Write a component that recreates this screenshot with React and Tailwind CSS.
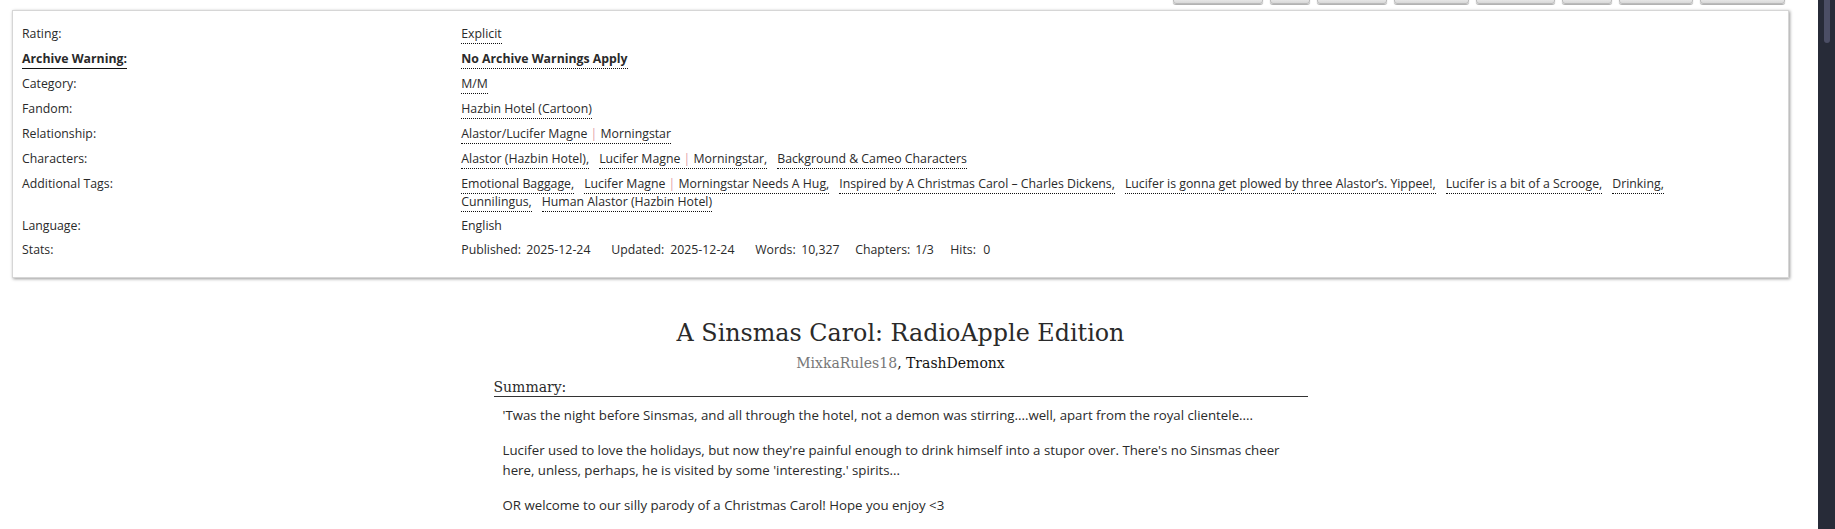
import React from 'react'

const sans = "font-['Open_Sans',sans-serif]"
const serif = "font-['DejaVu_Serif',serif]"

const navButtons = [90, 40, 70, 75, 79, 50, 74, 85]

const Tag = ({ children, last, bold }) => (
  <span className="inline-block mr-[10px]">
    <span className={`border-b border-dotted border-[#111] pb-[1px] ${bold ? 'font-bold' : ''}`}>
      {children}
      {!last && ','}
    </span>
  </span>
)

const Pipe = () => <span className="text-[#e3a0a8]"> | </span>

const Row = ({ label, strong, tight, children }) => (
  <div className={`flex leading-[18px] ${tight ? 'mb-[6px]' : 'mb-[7px]'}`}>
    <div className="w-1/4 shrink-0">
      {strong ? (
        <span className="font-bold border-b border-[#111] pb-[1px]">{label}</span>
      ) : (
        label
      )}
    </div>
    <div className="w-[72.5%]">{children}</div>
  </div>
)

// label width, value width (px) as laid out in the stats line
const stats = [
  ['Published:', '2025-12-24', 'w-[65px]', 'w-[85px]'],
  ['Updated:', '2025-12-24', 'w-[59px]', 'w-[85px]'],
  ['Words:', '10,327', 'w-[46px]', 'w-[54px]'],
  ['Chapters:', '1/3', 'w-[60px]', 'w-[35px]'],
  ['Hits:', '0', 'w-[33px]', 'w-[10px]'],
]

export default function App() {
  return (
    <div className={`flex h-[529px] w-full bg-white text-[#2a2a2a] overflow-hidden ${sans}`}>
      <div className="flex-1 min-w-0">
        <div className="ml-[12px] mr-[29px]">
          {/* work navigation buttons, scrolled mostly out of view */}
          <div className="flex justify-end gap-[7px] pr-[4px] h-[5px] overflow-hidden">
            {navButtons.map((w, i) => (
              <div
                key={i}
                style={{ width: w }}
                className="h-[5px] -mt-[1px] rounded-b-[3px] border border-[#bbb] bg-gradient-to-b from-[#e6e6e6] to-[#d8d8d8] shadow-[0_1px_1px_#aaa]"
              />
            ))}
          </div>

          {/* work meta */}
          <div className="mt-[5px] border border-[#d6d6d6] bg-white shadow-[1px_1px_3px_#999] px-[9px] pt-[14px] pb-[11px] text-[12.3px]">
            <Row label="Rating:">
              <Tag last>Explicit</Tag>
            </Row>
            <Row label="Archive Warning:" strong>
              <Tag last bold>No Archive Warnings Apply</Tag>
            </Row>
            <Row label="Category:">
              <Tag last>M/M</Tag>
            </Row>
            <Row label="Fandom:">
              <Tag last>Hazbin Hotel (Cartoon)</Tag>
            </Row>
            <Row label="Relationship:">
              <Tag last>
                Alastor/Lucifer Magne<Pipe />Morningstar
              </Tag>
            </Row>
            <Row label="Characters:">
              <Tag>Alastor (Hazbin Hotel)</Tag>
              <Tag>
                Lucifer Magne<Pipe />Morningstar
              </Tag>
              <Tag last>Background &amp; Cameo Characters</Tag>
            </Row>
            <Row label="Additional Tags:" tight>
              <Tag>Emotional Baggage</Tag>
              <Tag>
                Lucifer Magne<Pipe />Morningstar Needs A Hug
              </Tag>
              <Tag>Inspired by A Christmas Carol – Charles Dickens</Tag>
              <Tag>Lucifer is gonna get plowed by three Alastor’s. Yippee!</Tag>
              <Tag>Lucifer is a bit of a Scrooge</Tag>
              <Tag>Drinking</Tag>
              <Tag>Cunnilingus</Tag>
              <Tag last>Human Alastor (Hazbin Hotel)</Tag>
            </Row>
            <Row label="Language:" tight>English</Row>
            <Row label="Stats:">
              <div className="flex">
                {stats.map(([k, v, kw, vw]) => (
                  <span key={k} className="flex shrink-0">
                    <span className={`${kw} shrink-0`}>{k}</span>
                    <span className={`${vw} shrink-0`}>{v}</span>
                  </span>
                ))}
              </div>
            </Row>
          </div>

          {/* preface */}
          <div className="w-[814px] mx-auto mt-[40px]">
            <h2 className={`${serif} text-center text-[23.8px] leading-[30px] font-normal text-[#2a2a2a]`}>
              A Sinsmas Carol: RadioApple Edition
            </h2>
            <div className={`${serif} text-center text-[14px] leading-[22px] mt-[4px]`}>
              <span className="text-[#777]">MixkaRules18</span>
              <span className="text-[#111]">, TrashDemonx</span>
            </div>
            <div className={`${serif} text-[14px] leading-[18px] mt-[4px] border-b border-[#333]`}>Summary:</div>
            <div className="ml-[9px] mt-[8px] text-[13.25px] leading-[20px] text-[#2a2a2a] space-y-[15px]">
              <p>'Twas the night before Sinsmas, and all through the hotel, not a demon was stirring....well, apart from the royal clientele....</p>
              <p>
                Lucifer used to love the holidays, but now they're painful enough to drink himself into a stupor over. There's no Sinsmas cheer here, unless, perhaps, he is visited by some 'interesting.' spirits...
              </p>
              <p>OR welcome to our silly parody of a Christmas Carol! Hope you enjoy &lt;3</p>
            </div>
          </div>
        </div>
      </div>

      {/* scrollbar */}
      <div className="w-[17px] shrink-0 bg-[#272b38] pl-[6px]">
        <div className="w-[6px] h-[43px] rounded-b-full bg-[#4b4e65]" />
      </div>
    </div>
  )
}
